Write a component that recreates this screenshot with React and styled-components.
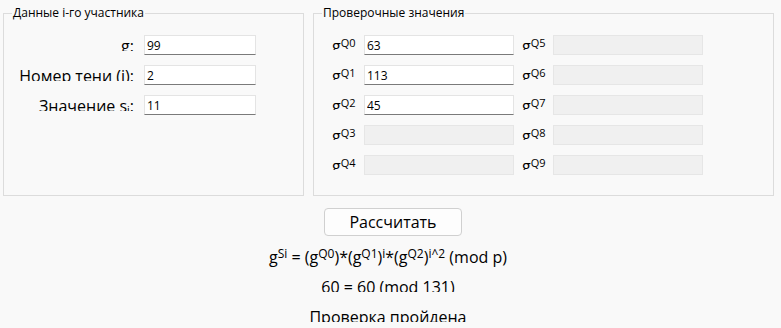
import styled, { createGlobalStyle } from 'styled-components'

const GlobalStyle = createGlobalStyle`
  body {
    margin: 0;
    background: #f9f9f9;
    font-family: 'Open Sans', 'Noto Sans', sans-serif;
    color: #000;
  }
`

const participant = [
  { label: 'g:', value: '99' },
  { label: 'Номер тени (i):', value: '2' },
  { label: 'Значение sᵢ:', value: '11' },
]

const checks = ['63', '113', '45', '', '', '', '', '', '', '']

export default function App() {
  return (
    <Window>
      <GlobalStyle />
      <Groups>
        <GroupBox>
          <Legend>Данные i-го участника</Legend>
          <ParticipantGrid>
            {participant.map((row) => (
              <Row key={row.label}>
                <FieldLabel $align="right" $h={16}>{row.label}</FieldLabel>
                <TextBox value={row.value} readOnly />
              </Row>
            ))}
          </ParticipantGrid>
        </GroupBox>
        <GroupBox>
          <Legend>Проверочные значения</Legend>
          <ChecksGrid>
            {[0, 1, 2, 3, 4].map((r) => (
              <Row key={r}>
                <FieldLabel $h={15}>
                  g<Sup>Q{r}</Sup>
                </FieldLabel>
                <TextBox value={checks[r]} readOnly disabled={!checks[r]} />
                <FieldLabel $h={15} $indent>
                  g<Sup>Q{r + 5}</Sup>
                </FieldLabel>
                <TextBox value={checks[r + 5]} readOnly disabled={!checks[r + 5]} />
              </Row>
            ))}
          </ChecksGrid>
        </GroupBox>
      </Groups>
      <Results>
        <CalcButton>Рассчитать</CalcButton>
        <Formula>
          g<Sup $size={12}>Si</Sup> = (g<Sup $size={12}>Q0</Sup>)*(g
          <Sup $size={12}>Q1</Sup>)<Sup $size={12}>i</Sup>*(g
          <Sup $size={12}>Q2</Sup>)<Sup $size={12}>i^2</Sup> (mod p)
        </Formula>
        <Line $top={8}>60 = 60 (mod 131)</Line>
        <Line $top={14}>Проверка пройдена</Line>
      </Results>
    </Window>
  )
}

const Window = styled.div`
  width: 781px;
  height: 328px;
  overflow: hidden;
`

const Groups = styled.div`
  display: flex;
  gap: 9px;
  padding: 5px 0 0 3px;
`

const GroupBox = styled.fieldset`
  box-sizing: border-box;
  margin: 0;
  padding: 0 0 20px 0;
  border: 1px solid #dcdcdc;
  min-width: 0;

  &:first-child {
    width: 301px;
  }
  &:last-child {
    width: 461px;
  }
`

const Legend = styled.legend`
  margin-left: 8px;
  padding: 0 1px;
  font-size: 12px;
  line-height: 16px;
`

const ParticipantGrid = styled.div`
  display: grid;
  grid-template-columns: 130px 112px;
  column-gap: 10px;
  row-gap: 10px;
  padding-top: 14px;
`

const ChecksGrid = styled.div`
  display: grid;
  grid-template-columns: 32px 150px 39px 150px;
  row-gap: 10px;
  padding: 14px 0 0 18px;
`

const Row = styled.div`
  display: contents;
`

const FieldLabel = styled.div`
  height: ${(p) => p.$h}px;
  overflow: hidden;
  font-size: 16px;
  line-height: normal;
  white-space: nowrap;
  text-align: ${(p) => p.$align || 'left'};
  padding-left: ${(p) => (p.$indent ? 8 : 0)}px;
`

const Sup = styled.sup`
  font-size: ${(p) => p.$size || 11}px;
  line-height: 1;
  vertical-align: 5px;
`

const TextBox = styled.input`
  box-sizing: border-box;
  width: 100%;
  height: 20px;
  margin: 0;
  padding: 0 2px;
  font-family: inherit;
  font-size: 12px;
  color: #000;
  background: #fff;
  border: 1px solid #e4e4e4;
  border-bottom-color: #7a7a7a;
  outline: none;

  &:disabled {
    background: #f0f0f0;
    border-color: #e6e6e6;
  }
`

const Results = styled.div`
  display: flex;
  flex-direction: column;
  align-items: center;
  padding-right: 5px;
`

const CalcButton = styled.button`
  box-sizing: border-box;
  width: 138px;
  height: 28px;
  margin: 12px 0 0 10px;
  padding: 0;
  font-family: inherit;
  font-size: 16px;
  color: #000;
  background: #fdfdfd;
  border: 1px solid #d0d0d0;
  border-radius: 4px;
`

const Formula = styled.div`
  margin-top: 10px;
  font-size: 16px;
  line-height: normal;
  white-space: nowrap;
`

const Line = styled.div`
  margin-top: ${(p) => p.$top}px;
  height: 16px;
  overflow: hidden;
  font-size: 16px;
  line-height: normal;
  white-space: nowrap;
`
